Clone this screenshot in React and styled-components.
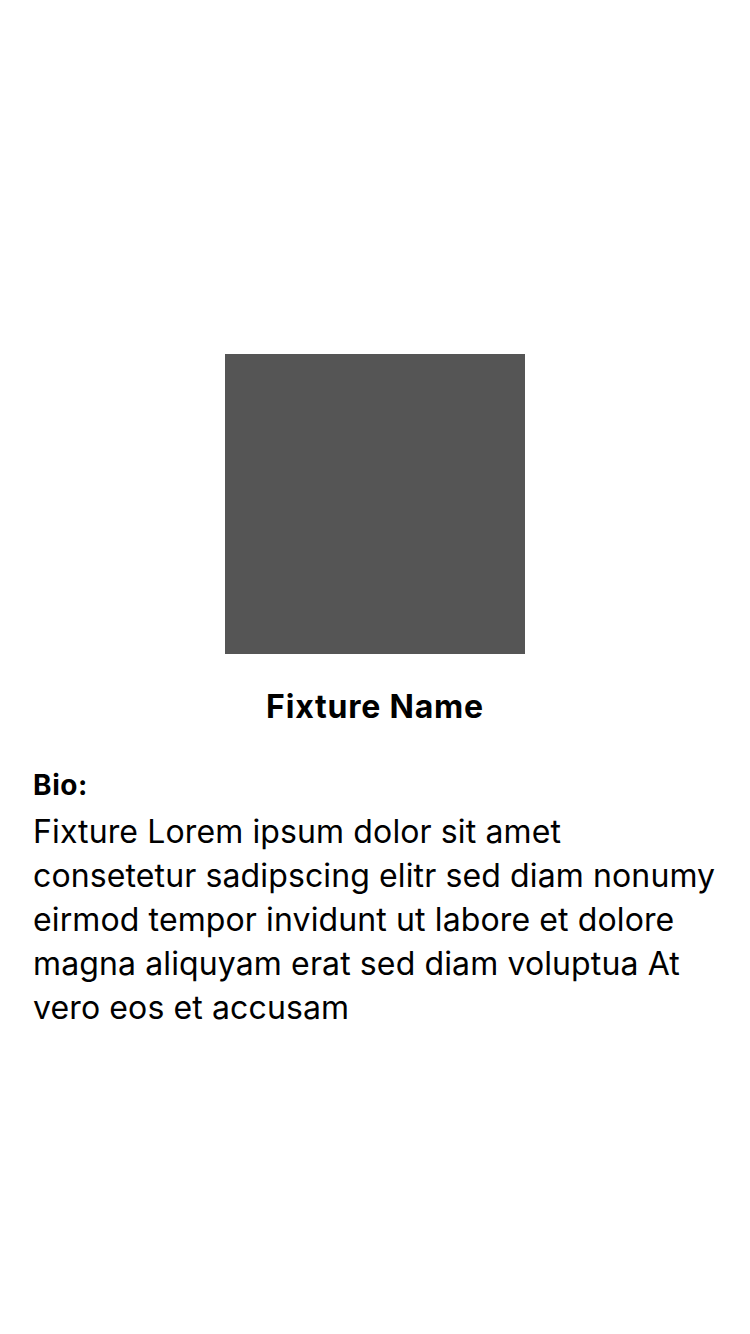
import styled, { createGlobalStyle } from "styled-components";

const GlobalStyle = createGlobalStyle`
  html, body {
    margin: 0;
    padding: 0;
    background: #ffffff;
  }
  body {
    font-family: Inter, "Liberation Sans", sans-serif;
    color: #000000;
  }
`;

const Page = styled.div`
  width: 750px;
  height: 1334px;
  display: flex;
  flex-direction: column;
  align-items: center;
  padding-top: 354px;
  box-sizing: border-box;
`;

const Photo = styled.div`
  width: 300px;
  height: 300px;
  background: #555555;
`;

const Name = styled.h1`
  margin: 31px 0 0;
  font-size: 32px;
  line-height: 44px;
  font-weight: 700;
  letter-spacing: 0.8px;
`;

const Details = styled.div`
  align-self: stretch;
  padding: 0 33px;
  margin-top: 36px;
  display: flex;
  flex-direction: column;
`;

const Label = styled.div`
  font-size: 28px;
  line-height: 40px;
  font-weight: 700;
  letter-spacing: 0.6px;
`;

const Bio = styled.p`
  margin: 5px 0 0;
  font-size: 32px;
  line-height: 44px;
  font-weight: 400;
  letter-spacing: 0.12px;
`;

const App = () => {
  return (
    <>
      <GlobalStyle />
      <Page>
        <Photo />
        <Name>Fixture Name</Name>
        <Details>
          <Label>Bio:</Label>
          <Bio>
            Fixture Lorem ipsum dolor sit amet consetetur sadipscing elitr sed
            diam nonumy eirmod tempor invidunt ut labore et dolore magna
            aliquyam erat sed diam voluptua At vero eos et accusam
          </Bio>
        </Details>
      </Page>
    </>
  );
};

export default App;
